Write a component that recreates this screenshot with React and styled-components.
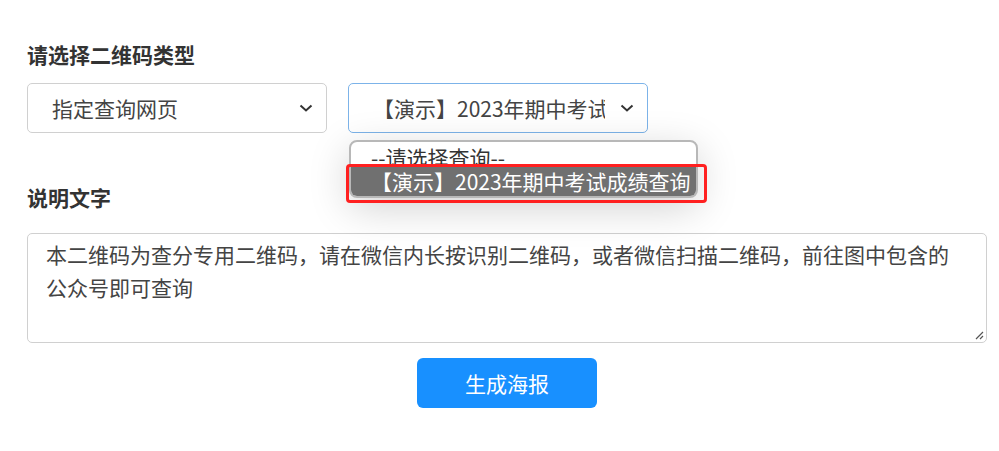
import styled, { createGlobalStyle } from "styled-components";

const GlobalStyle = createGlobalStyle`
  html, body {
    margin: 0;
    padding: 0;
    background: #fff;
    font-family: "Noto Sans CJK SC", "Noto Sans", sans-serif;
  }
`;

const Page = styled.div`
  width: 999px;
  height: 451px;
  padding: 40px 12px 0 27px;
  box-sizing: border-box;
  position: relative;
  overflow: hidden;
`;

const Label = styled.div`
  font-size: 21px;
  font-weight: 700;
  color: #333;
  line-height: 28px;
  margin-bottom: ${(p) => p.$gap || 15}px;
`;

const SelectRow = styled.div`
  display: flex;
  gap: 21px;
  margin-bottom: 50px;
`;

const SelectWrap = styled.div`
  position: relative;
`;

const SelectBox = styled.div`
  width: 300px;
  height: 50px;
  box-sizing: border-box;
  border: 1px solid ${(p) => (p.$focus ? "#7cb3e9" : "#d0d0d0")};
  border-radius: 5px;
  display: flex;
  align-items: center;
  padding: 0 12px 0 24px;
  font-size: 21px;
  color: #444;
  background: #fff;
`;

const SelectText = styled.span`
  flex: 1;
  overflow: hidden;
  white-space: nowrap;
  max-width: ${(p) => p.$max || 300}px;
`;

const Chevron = () => (
  <svg width="16" height="10" viewBox="0 0 16 10" style={{ marginLeft: "auto" }}>
    <path d="M2.5 2.5 L8 7.5 L13.5 2.5" fill="none" stroke="#333" strokeWidth="2" />
  </svg>
);

const Dropdown = styled.div`
  position: absolute;
  left: 1px;
  top: 57px;
  width: 349px;
  height: 58px;
  box-sizing: border-box;
  border: 2px solid #b8b8b8;
  border-radius: 8px;
  background: #fff;
  box-shadow: 0 10px 40px rgba(0, 0, 0, 0.18);
  overflow: hidden;
  z-index: 5;
`;

const Option = styled.div`
  height: ${(p) => p.$h}px;
  line-height: 30px;
  font-size: 21px;
  padding-left: ${(p) => p.$pad}px;
  white-space: nowrap;
  overflow: hidden;
  background: ${(p) => (p.$active ? "#707070" : "transparent")};
  color: ${(p) => (p.$active ? "#fff" : "#333")};
  border-radius: ${(p) => (p.$active ? "0 0 6px 6px" : "0")};
`;

const Highlight = styled.div`
  position: absolute;
  left: -2px;
  top: 81px;
  width: 361px;
  height: 39px;
  box-sizing: border-box;
  border: 3px solid #ff2020;
  border-radius: 4px;
  z-index: 6;
`;

const TextArea = styled.div`
  position: relative;
  width: 960px;
  height: 110px;
  box-sizing: border-box;
  border: 1px solid #d0d0d0;
  border-radius: 5px;
  padding: 4px 18px;
  font-size: 21px;
  line-height: 33px;
  color: #444;
  margin-bottom: 15px;
`;

const Grip = styled.svg`
  position: absolute;
  right: 2px;
  bottom: 2px;
`;

const ButtonRow = styled.div`
  display: flex;
  justify-content: center;
  width: 960px;
`;

const Button = styled.button`
  width: 180px;
  height: 50px;
  border: none;
  border-radius: 6px;
  background: #1890ff;
  color: #fff;
  font-family: inherit;
  font-size: 21px;
`;

export default function App() {
  return (
    <>
      <GlobalStyle />
      <Page>
        <Label>请选择二维码类型</Label>
        <SelectRow>
          <SelectBox>
            <SelectText>指定查询网页</SelectText>
            <Chevron />
          </SelectBox>
          <SelectWrap>
            <SelectBox $focus>
              <SelectText $max={232}>【演示】2023年期中考试成绩查询</SelectText>
              <Chevron />
            </SelectBox>
            <Dropdown>
              <Option $h={24} $pad={20}>--请选择查询--</Option>
              <Option $h={32} $pad={20} $active>
                【演示】2023年期中考试成绩查询
              </Option>
            </Dropdown>
            <Highlight />
          </SelectWrap>
        </SelectRow>
        <Label $gap={22}>说明文字</Label>
        <TextArea>
          本二维码为查分专用二维码，请在微信内长按识别二维码，或者微信扫描二维码，前往图中包含的公众号即可查询
          <Grip width="10" height="10" viewBox="0 0 10 10">
            <path d="M9 2 L2 9 M9 6 L6 9" stroke="#555" strokeWidth="1.2" />
          </Grip>
        </TextArea>
        <ButtonRow>
          <Button>生成海报</Button>
        </ButtonRow>
      </Page>
    </>
  );
}
